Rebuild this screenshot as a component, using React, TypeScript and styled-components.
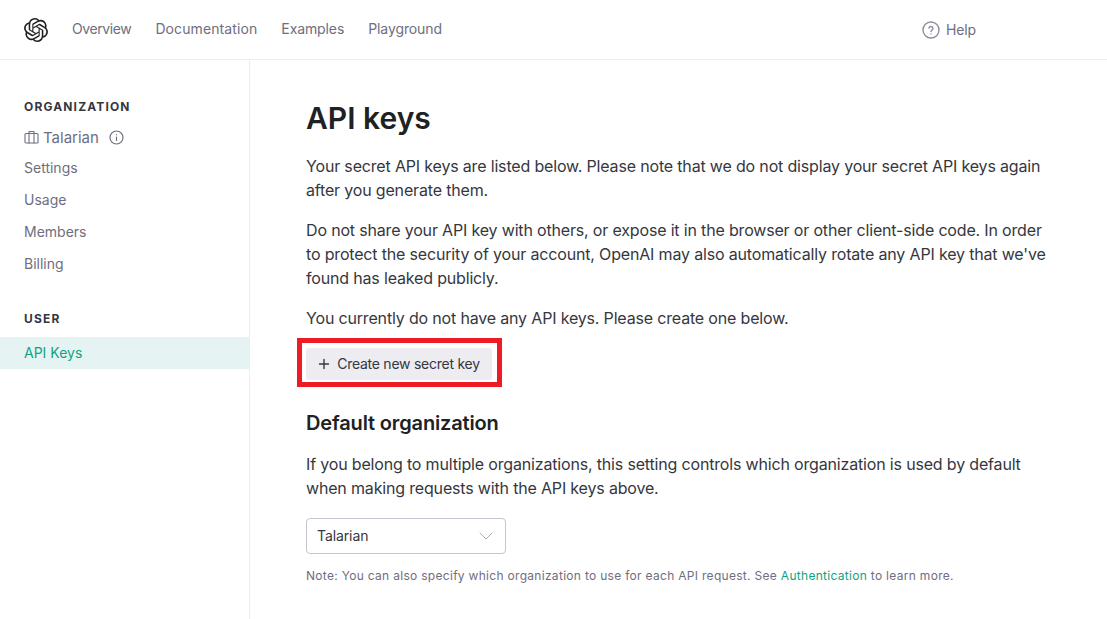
import React from "react";
import styled, { createGlobalStyle } from "styled-components";

const Global = createGlobalStyle`
  html, body { margin: 0; padding: 0; background: #fff; }
  body { font-family: Inter, "Noto Sans", sans-serif; color: #353740; }
`;

const Page = styled.div`
  height: 619px;
  overflow: hidden;
  display: flex;
  flex-direction: column;
`;

const Header = styled.header`
  height: 59px;
  flex: none;
  display: flex;
  align-items: center;
  border-bottom: 1px solid #ececf1;
  padding-left: 24px;
`;

const Logo = styled.svg`
  width: 24px;
  height: 24px;
  fill: #202123;
  margin-right: 24px;
`;

const NavList = styled.nav`
  display: flex;
  gap: 24px;
  margin-bottom: 2px;
`;

const NavLink = styled.span<{ $track?: number }>`
  font-size: 14px;
  line-height: 20px;
  letter-spacing: ${(p) => p.$track ?? -0.1}px;
  color: #6e6e80;
`;

const Help = styled.div`
  display: flex;
  align-items: center;
  gap: 6px;
  margin-left: 480px;
  font-size: 14px;
  letter-spacing: -0.15px;
  color: #6e6e80;
`;

const HelpIcon = styled.svg`
  fill: none;
  stroke: #8e8ea0;
  stroke-linecap: round;
  stroke-linejoin: round;
`;

const Body = styled.div`
  flex: 1;
  display: flex;
  min-height: 0;
`;

const Sidebar = styled.aside`
  width: 249px;
  flex: none;
  border-right: 1px solid #ececf1;
  padding-top: 38px;
`;

const SectionTitle = styled.div<{ $gap?: number }>`
  font-size: 12px;
  line-height: 18px;
  font-weight: 700;
  letter-spacing: 1.15px;
  color: #353740;
  padding-left: 24px;
  margin-top: ${(p) => p.$gap ?? 0}px;
  margin-bottom: 9px;
`;

const OrgRow = styled.div`
  display: flex;
  align-items: center;
  height: 24px;
  margin: 1px 0 2px;
  padding-left: 24px;
  font-size: 15px;
  color: #6e6e80;
`;

const OrgName = styled.span`
  margin-left: 4px;
  margin-right: 10px;
`;

const SideItem = styled.div<{ $active?: boolean }>`
  box-sizing: border-box;
  height: 32px;
  display: flex;
  align-items: center;
  padding: 0 0 ${(p) => (p.$active ? 2 : 0)}px 24px;
  font-size: 14px;
  color: ${(p) => (p.$active ? "#10a37f" : "#6e6e80")};
  background: ${(p) => (p.$active ? "#e6f3f3" : "transparent")};
`;

const Main = styled.main`
  flex: 1;
  padding: 39px 0 0 56px;
`;

const Title = styled.h1`
  margin: 0 0 17px;
  font-size: 30px;
  line-height: 38px;
  font-weight: 600;
  color: #202123;
`;

const Para = styled.p`
  margin: 0 0 16px;
  width: 750px;
  font-size: 16px;
  line-height: 24px;
  letter-spacing: -0.17px;
  color: #353740;
`;

const Highlight = styled.div`
  width: fit-content;
  margin: -8px 0 0 -9px;
  padding: 5px 5px 2px 4px;
  border: 5px solid #ed1c24;
  display: flex;
`;

const CreateButton = styled.button`
  height: 32px;
  width: 186px;
  padding: 0 0 1px;
  border: 0;
  border-radius: 3px;
  background: #ececf1;
  color: #353740;
  font: 400 14px/20px Inter, sans-serif;
  letter-spacing: -0.25px;
  display: flex;
  align-items: center;
  justify-content: center;
  gap: 7px;
`;

const SubTitle = styled.h2`
  margin: 24px 0 17px;
  font-size: 20px;
  line-height: 24px;
  font-weight: 600;
  letter-spacing: -0.15px;
  color: #202123;
`;

const Select = styled.div`
  box-sizing: border-box;
  width: 200px;
  height: 36px;
  margin-top: 18px;
  border: 1px solid #c5c5d2;
  border-radius: 4px;
  display: flex;
  align-items: center;
  justify-content: space-between;
  padding: 0 12px 1px 10px;
  font-size: 14px;
  letter-spacing: -0.1px;
  color: #353740;
`;

const Note = styled.div`
  margin-top: 13px;
  font-size: 12px;
  line-height: 18px;
  letter-spacing: 0.3px;
  color: #6e6e80;
`;

const Accent = styled.span`
  color: #10a37f;
`;

const Icon = styled.svg`
  fill: none;
  stroke: currentColor;
  stroke-linecap: round;
  stroke-linejoin: round;
`;

const OPENAI =
  "M22.2819 9.8211a5.9847 5.9847 0 0 0-.5157-4.9108 6.0462 6.0462 0 0 0-6.5098-2.9A6.0651 6.0651 0 0 0 4.9807 4.1818a5.9847 5.9847 0 0 0-3.9977 2.9 6.0462 6.0462 0 0 0 .7427 7.0966 5.98 5.98 0 0 0 .511 4.9107 6.051 6.051 0 0 0 6.5146 2.9001A5.9847 5.9847 0 0 0 13.2599 24a6.0557 6.0557 0 0 0 5.7718-4.2058 5.9894 5.9894 0 0 0 3.9977-2.9001 6.0557 6.0557 0 0 0-.7475-7.0729zm-9.022 12.6081a4.4755 4.4755 0 0 1-2.8764-1.0408l.1419-.0804 4.7783-2.7582a.7948.7948 0 0 0 .3927-.6813v-6.7369l2.02 1.1686a.071.071 0 0 1 .038.052v5.5826a4.504 4.504 0 0 1-4.4945 4.4944zm-9.6607-4.1254a4.4708 4.4708 0 0 1-.5346-3.0137l.142.0852 4.783 2.7582a.7712.7712 0 0 0 .7806 0l5.8428-3.3685v2.3324a.0804.0804 0 0 1-.0332.0615L9.74 19.9502a4.4992 4.4992 0 0 1-6.1408-1.6464zM2.3408 7.8956a4.485 4.485 0 0 1 2.3655-1.9728V11.6a.7664.7664 0 0 0 .3879.6765l5.8144 3.3543-2.0201 1.1685a.0757.0757 0 0 1-.071 0l-4.8303-2.7865A4.504 4.504 0 0 1 2.3408 7.872zm16.5963 3.8558L13.1038 8.364 15.1192 7.2a.0757.0757 0 0 1 .071 0l4.8303 2.7913a4.4944 4.4944 0 0 1-.6765 8.1042v-5.6772a.79.79 0 0 0-.407-.667zm2.0107-3.0231l-.142-.0852-4.7735-2.7818a.7759.7759 0 0 0-.7854 0L9.409 9.2297V6.8974a.0662.0662 0 0 1 .0284-.0615l4.8303-2.7866a4.4992 4.4992 0 0 1 6.6802 4.66zM8.3065 12.863l-2.02-1.1638a.0804.0804 0 0 1-.038-.0567V6.0742a4.4992 4.4992 0 0 1 7.3757-3.4537l-.142.0805L8.704 5.459a.7948.7948 0 0 0-.3927.6813zm1.0976-2.3654l2.602-1.4998 2.6069 1.4998v2.9994l-2.5974 1.4997-2.6067-1.4997Z";

export default function App() {
  return (
    <Page>
      <Global />
      <Header>
        <Logo viewBox="0 0 24 24">
          <path d={OPENAI} />
        </Logo>
        <NavList>
          <NavLink $track={-0.4}>Overview</NavLink>
          <NavLink $track={0.1}>Documentation</NavLink>
          <NavLink>Examples</NavLink>
          <NavLink>Playground</NavLink>
        </NavList>
        <Help>
          <HelpIcon width="18" height="18" viewBox="0 0 18 18" strokeWidth="1.4">
            <circle cx="9" cy="9" r="8" />
            <path d="M6.9 7a2.1 2.1 0 0 1 4.1.6c0 1.4-2 1.7-2 2.9" />
            <path d="M9 13v.1" />
          </HelpIcon>
          Help
        </Help>
      </Header>
      <Body>
        <Sidebar>
          <SectionTitle>ORGANIZATION</SectionTitle>
          <OrgRow>
            <Icon width="15" height="14" viewBox="0 0 15 14" strokeWidth="1.1">
              <rect x="1" y="3.5" width="13" height="9.5" rx="1" />
              <path d="M5 13V1.5h5V13" />
            </Icon>
            <OrgName>Talarian</OrgName>
            <Icon width="15" height="15" viewBox="0 0 15 15" strokeWidth="1.2">
              <circle cx="7.5" cy="7.5" r="6.5" />
              <path d="M7.5 7v3.5M7.5 4.6v.1" />
            </Icon>
          </OrgRow>
          <SideItem>Settings</SideItem>
          <SideItem>Usage</SideItem>
          <SideItem>Members</SideItem>
          <SideItem>Billing</SideItem>
          <SectionTitle $gap={31}>USER</SectionTitle>
          <SideItem $active>API Keys</SideItem>
        </Sidebar>
        <Main>
          <Title>API keys</Title>
          <Para>
            Your secret API keys are listed below. Please note that we do not display your secret API keys again after you generate them.
          </Para>
          <Para>
            Do not share your API key with others, or expose it in the browser or other client-side code. In order to protect the security of your account, OpenAI may also automatically rotate any API key that we've found has leaked publicly.
          </Para>
          <Para>You currently do not have any API keys. Please create one below.</Para>
          <Highlight>
            <CreateButton>
              <Icon width="12" height="12" viewBox="0 0 12 12" strokeWidth="1.4">
                <path d="M6 1.5v9M1.5 6h9" />
              </Icon>
              Create new secret key
            </CreateButton>
          </Highlight>
          <SubTitle>Default organization</SubTitle>
          <Para>
            If you belong to multiple organizations, this setting controls which organization is used by default when making requests with the API keys above.
          </Para>
          <Select>
            Talarian
            <Icon width="14" height="8" viewBox="0 0 14 8" strokeWidth="1" color="#acacbe">
              <path d="M1 1l6 6 6-6" />
            </Icon>
          </Select>
          <Note>
            Note: You can also specify which organization to use for each API request. See <Accent>Authentication</Accent> to learn more.
          </Note>
        </Main>
      </Body>
    </Page>
  );
}
